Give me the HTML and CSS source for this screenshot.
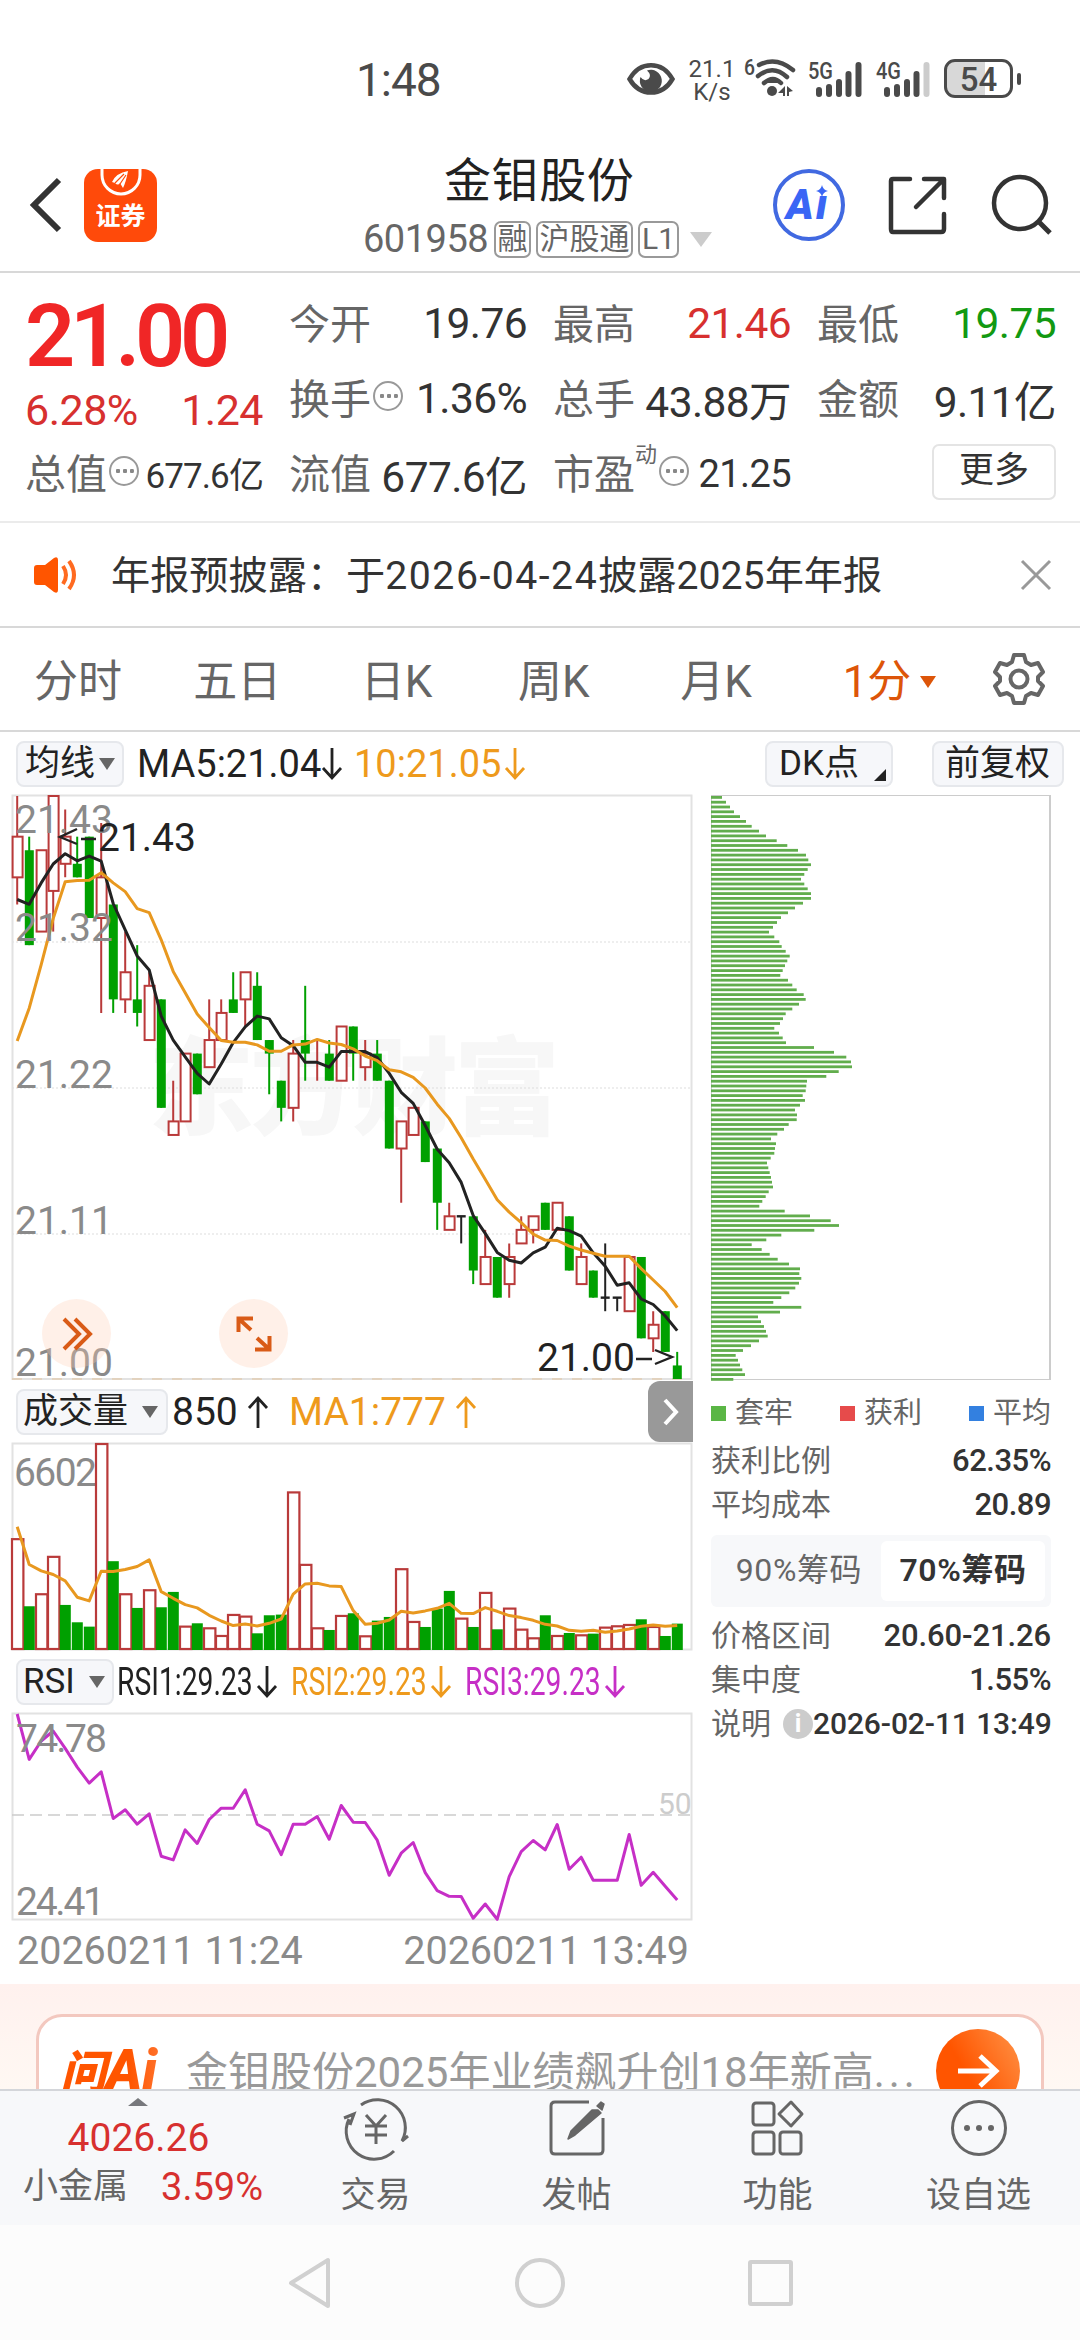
FILE: index.html
```html
<!DOCTYPE html>
<html lang="zh-CN">
<head>
  <meta charset="UTF-8">
  <meta name="viewport" content="width=device-width, initial-scale=1.0">
  <title>金钼股份 601958</title>
  <link rel="stylesheet" href="styles.css">
</head>
<body>
  <!-- 状态栏 -->
  <div class="status">
    <span class="clock">1:48</span>
    <svg class="eye" width="48" height="34" viewBox="0 0 48 34">
      <path d="M2.500 17C13 -1.500 35 -1.500 45.500 17C35 35 13 35 2.500 17Z" fill="none" stroke="#4a4a4a" stroke-width="4.500"/>
      <path d="M20 8.500A11 11 0 1 1 13.500 15Q17 20 21.500 17Q25 13 20 8.500Z" fill="#4a4a4a"/>
    </svg>
    <div class="speed"><span>21.1</span><span>K/s</span></div>
    <svg class="wifi" width="52" height="40" viewBox="0 0 52 40">
      <text x="0" y="17" font-size="22" font-weight="500" textLength="11" lengthAdjust="spacingAndGlyphs">6</text>
      <g fill="none" stroke="#4a4a4a" stroke-width="4.500" stroke-linecap="round">
        <path d="M15 7Q32 -2 49 12"/>
        <path d="M14 18Q29 6 43 19"/>
        <path d="M20 25Q29 17 37 25"/>
      </g>
      <circle cx="28" cy="33" r="5"/>
      <path d="M41 28v10h-2v-3h-5zM43 28l6 5-4 1v4h-2z"/>
    </svg>
    <svg class="signal" width="54" height="40" viewBox="0 0 54 40">
      <text x="0" y="19" font-size="24" font-weight="500" textLength="25" lengthAdjust="spacingAndGlyphs">5G</text>
      <g stroke="#4a4a4a" stroke-width="6" stroke-linecap="round">
        <path d="M11 30v4M21 27v7M31 22v12M40.500 14v20M50.500 5v29"/>
      </g>
    </svg>
    <svg class="signal" width="54" height="40" viewBox="0 0 54 40">
      <text x="0" y="19" font-size="24" font-weight="500" textLength="25" lengthAdjust="spacingAndGlyphs">4G</text>
      <g stroke="#4a4a4a" stroke-width="6" stroke-linecap="round">
        <path d="M11 30v4M21 27v7M31 22v12M40.500 14v20"/>
        <path d="M50.500 5v29" stroke="#ccc"/>
      </g>
    </svg>
    <div class="battery">54</div>
    <i class="battery-cap"></i>
  </div>

  <!-- 标题栏 -->
  <header class="header">
    <svg class="back" width="34" height="56" viewBox="0 0 34 56">
      <path d="M30 3L5 28L30 53" fill="none" stroke="#333" stroke-width="6"/>
    </svg>
    <div class="app-icon">
      <svg width="44" height="27" viewBox="0 0 44 27">
        <path d="M3 0V6A19 19 0 0 0 41 6V0" fill="none" stroke="#fff" stroke-width="3"/>
        <path d="M13 13Q17 4 29 2Q27 13 24 19L21 14Q19 17 16 14Z" fill="#fff"/>
        <path d="M16 14L25 5M21 15L27 6" stroke="#ff4a0a" stroke-width="1.200"/>
      </svg>
      <span>证券</span>
    </div>
    <div class="title">
      <h1>金钼股份</h1>
      <div class="code">
        <span class="num">601958</span>
        <span class="tag t1">融</span>
        <span class="tag t2">沪股通</span>
        <span class="tag t3">L1</span>
        <i class="tri tri-light"></i>
      </div>
    </div>
    <div class="ai-btn">
      <span class="ai-text">A<b>ı</b></span>
      <svg width="12" height="12" viewBox="0 0 12 12"><path d="M6 0Q7 5 12 6Q7 7 6 12Q5 7 0 6Q5 5 6 0Z" fill="#3a66f5"/></svg>
    </div>
    <svg class="share" width="60" height="60" viewBox="0 0 60 60" fill="none" stroke="#333" stroke-width="4.500" stroke-linecap="round" stroke-linejoin="round">
      <path d="M23 4H6Q4 4 4 6V54Q4 57 6 57H54Q57 57 57 54V39M37 4H57V23M56 5L29 32"/>
    </svg>
    <svg class="search" width="62" height="62" viewBox="0 0 62 62" fill="none" stroke="#333" stroke-width="4.500">
      <circle cx="29" cy="29" r="26"/>
      <path d="M47 47L59 59" stroke-width="5"/>
    </svg>
  </header>

  <!-- 行情 -->
  <section class="quote">
    <div class="price">
      <div class="last">21.00</div>
      <div class="change"><span>6.28%</span><span>1.24</span></div>
      <div class="cell small"><label>总值</label><i class="more-dot"></i><b>677.6亿</b></div>
    </div>
    <div class="stats">
      <div class="cell"><label>今开</label><b>19.76</b></div>
      <div class="cell"><label>最高</label><b class="red">21.46</b></div>
      <div class="cell"><label>最低</label><b class="green">19.75</b></div>
      <div class="cell"><label>换手</label><i class="more-dot"></i><b>1.36%</b></div>
      <div class="cell"><label>总手</label><b>43.88万</b></div>
      <div class="cell"><label>金额</label><b>9.11亿</b></div>
      <div class="cell"><label>流值</label><b>677.6亿</b></div>
      <div class="cell pe"><label>市盈</label><sup>动</sup><i class="more-dot"></i><b>21.25</b></div>
      <div class="cell"><button class="more">更多</button></div>
    </div>
  </section>

  <!-- 公告 -->
  <section class="notice">
    <svg width="46" height="38" viewBox="0 0 46 38">
      <path d="M4 9H12L21 2Q25 0 25 4V34Q25 38 21 36L12 29H4Q1 29 1 26V12Q1 9 4 9Z" fill="#ff5500"/>
      <path d="M30 10Q36 19 30 28M36 5Q46 19 36 33" fill="none" stroke="#ff6a20" stroke-width="4"/>
    </svg>
    <p>年报预披露：于<span>2026-04-24</span>披露<span class="y">2025</span>年年报</p>
    <svg class="close" width="30" height="30" viewBox="0 0 30 30"><path d="M1 1L29 29M29 1L1 29" stroke="#999" stroke-width="3"/></svg>
  </section>

  <!-- 周期 -->
  <nav class="tabs">
    <a>分时</a><a>五日</a><a>日K</a><a>周K</a><a>月K</a>
    <a class="active">1分<i class="tri"></i></a>
    <svg width="54" height="54" viewBox="0 0 54 54" fill="none" stroke="#666" stroke-width="4" stroke-linejoin="round">
      <path d="M22 3H32L34 10L39 13L46 11L51 20L46 25V29L51 34L46 43L39 41L34 44L32 51H22L20 44L15 41L8 43L3 34L8 29V25L3 20L8 11L15 13L20 10Z"/>
      <circle cx="27" cy="27" r="8.500"/>
    </svg>
  </nav>

  <div class="ind ind-ma">
    <span class="pick">均线<i class="tri"></i></span>
    <span class="v">MA5:21.04</span><svg class="arrow" viewBox="0 0 20 32"><path d="M10 0V30M1 20L10 30L19 20"/></svg>
    <span class="v orange v2">10:21.05</span><svg class="arrow orange" viewBox="0 0 20 32"><path d="M10 0V30M1 20L10 30L19 20"/></svg>
    <span class="pick dk">DK点<i class="corner"></i></span>
    <span class="pick fq">前复权</span>
  </div>

  <main class="main">
    <div class="left">
      <div class="kbox">
        <svg id="kline" width="681" height="585" viewBox="0 0 681 585"></svg>
        <div class="float f1"><svg width="32" height="32" viewBox="0 0 32 32"><path d="M3 1L18 16L3 31M14 1L29 16L14 31"/></svg></div>
        <div class="float f2"><svg width="36" height="36" viewBox="0 0 36 36"><path d="M2.500 16V2.500H17M3 3L15 14M33.500 20V33.500H19M33 33L21 22"/></svg></div>
      </div>
      <div class="ind ind-vol">
        <span class="pick">成交量<i class="tri"></i></span>
        <span class="v">850</span><svg class="arrow" viewBox="0 0 20 32"><path d="M10 32V2M1 12L10 2L19 12"/></svg>
        <span class="v orange v2">MA1:777</span><svg class="arrow orange" viewBox="0 0 20 32"><path d="M10 32V2M1 12L10 2L19 12"/></svg>
        <span class="next"><svg width="20" height="28" viewBox="0 0 20 28"><path d="M4 2L15 14L4 26" fill="none" stroke="#fff" stroke-width="4"/></svg></span>
      </div>
      <svg id="volume" width="681" height="208" viewBox="0 0 681 208"></svg>
      <div class="ind ind-rsi">
        <span class="pick">RSI<i class="tri"></i></span>
        <span class="r"><span>RSI1:29.23</span></span><svg class="arrow" viewBox="0 0 20 32"><path d="M10 0V30M1 20L10 30L19 20"/></svg>
        <span class="r orange"><span>RSI2:29.23</span></span><svg class="arrow orange" viewBox="0 0 20 32"><path d="M10 0V30M1 20L10 30L19 20"/></svg>
        <span class="r purple"><span>RSI3:29.23</span></span><svg class="arrow purple" viewBox="0 0 20 32"><path d="M10 0V30M1 20L10 30L19 20"/></svg>
      </div>
      <svg id="rsi" width="681" height="208" viewBox="0 0 681 208"></svg>
      <div class="dates"><span>20260211 11:24</span><span>20260211 13:49</span></div>
    </div>

    <!-- 筹码分布 -->
    <aside class="chips">
      <svg id="chips" width="340" height="585" viewBox="0 0 340 585"></svg>
      <div class="legend">
        <span><i class="lg"></i>套牢</span><span><i class="lr"></i>获利</span><span><i class="lb"></i>平均</span>
      </div>
      <div class="row"><span>获利比例</span><b>62.35%</b></div>
      <div class="row"><span>平均成本</span><b>20.89</b></div>
      <div class="switch"><span>90%筹码</span><span class="on">70%筹码</span></div>
      <div class="row"><span>价格区间</span><b class="range">20.60-21.26</b></div>
      <div class="row"><span>集中度</span><b>1.55%</b></div>
      <div class="row"><span>说明</span><i class="info">i</i><b class="time">2026-02-11 13:49</b></div>
    </aside>
  </main>

  <!-- 问Ai -->
  <section class="ask">
    <div class="ask-card">
      <span class="ask-logo"><em>问</em>Ai</span>
      <p>金钼股份2025年业绩飙升创18年新高<u>...</u></p>
      <span class="go"><svg width="42" height="36" viewBox="0 0 42 36"><path d="M1 18H38M23 3L39 18L23 33" fill="none" stroke="#fff" stroke-width="5"/></svg></span>
    </div>
  </section>

  <!-- 底部导航 -->
  <nav class="bottom">
    <div class="index">
      <i class="tri up"></i>
      <b>4026.26</b>
      <div><span>小金属</span><b>3.59%</b></div>
    </div>
    <a>
      <svg width="66" height="60" viewBox="0 0 66 60" fill="none" stroke="#666" stroke-width="3">
        <path d="M18 7A28 28 0 0 1 59 43L65 38M6 21A28 28 0 0 0 51 53M1 20L11 16L7 27"/>
        <path d="M23 17L33 28L43 17M22 28H44M22 37H44M33 28V46"/>
      </svg>
      交易
    </a>
    <a>
      <svg width="60" height="60" viewBox="0 0 60 60" fill="none" stroke="#666" stroke-width="3" stroke-linejoin="round">
        <path d="M42 4H8Q4 4 4 8V52Q4 56 8 56H52Q56 56 56 52V20"/>
        <path d="M51 12L54 15L28 37L21 41L24 33L45 12ZM50 8L54 4L57 6L55 12Z" fill="#666" stroke-width="1.500"/>
      </svg>
      发帖
    </a>
    <a>
      <svg width="60" height="60" viewBox="0 0 60 60" fill="none" stroke="#666" stroke-width="3">
        <rect x="5" y="5" width="21" height="22" rx="3"/>
        <rect x="5" y="34" width="21" height="22" rx="3"/>
        <rect x="32" y="34" width="21" height="22" rx="3"/>
        <path d="M43 4L54 16L43 28L31 16Z" stroke-linejoin="round"/>
      </svg>
      功能
    </a>
    <a>
      <svg width="60" height="60" viewBox="0 0 60 60">
        <circle cx="30" cy="30" r="26.500" fill="none" stroke="#666" stroke-width="3"/>
        <g fill="#666"><circle cx="18" cy="30" r="3"/><circle cx="30" cy="30" r="3"/><circle cx="42" cy="30" r="3"/></g>
      </svg>
      设自选
    </a>
  </nav>

  <div class="sysnav">
    <svg width="46" height="54" viewBox="0 0 46 54"><path d="M42 4V50L5 27Z"/></svg>
    <svg width="50" height="54" viewBox="0 0 50 54"><circle cx="25" cy="27" r="23"/></svg>
    <svg width="46" height="54" viewBox="0 0 46 54"><rect x="2" y="6" width="41" height="42" rx="1"/></svg>
  </div>

  <script src="chart.js"></script>
</body>
</html>
```

FILE: styles.css
```css
* {
  box-sizing: border-box;
}

body {
  margin: 0;
  width: 1080px;
  height: 2340px;
  overflow: hidden;
  background: #fff;
  color: #333;
  font-family: Roboto, "Noto Sans CJK SC", sans-serif;
}

svg {
  display: block;
  flex: none;
  overflow: visible;
}

i {
  font-style: normal;
}

.red {
  color: #d7302f;
}

.green {
  color: #129912;
}

.tri {
  display: inline-block;
  border: 8px solid transparent;
  border-top: 12px solid #666;
  border-bottom: 0;
}

/* 状态栏 */
.status {
  height: 150px;
  padding: 58px 0 0 356px;
  display: flex;
  align-items: flex-start;
  color: #4a4a4a;
}

.status text,
.status circle,
.wifi path:last-child {
  fill: #4a4a4a;
}

.clock {
  width: 271px;
  margin-top: -5px;
  font-size: 46px;
  line-height: 54px;
  letter-spacing: -1px;
}

.eye {
  margin-top: 4px;
}

.speed {
  width: 44px;
  margin-left: 15px;
  display: flex;
  flex-direction: column;
  align-items: center;
  font-size: 24px;
  line-height: 23px;
}

.wifi {
  margin-left: 10px;
}

.signal {
  margin: 2px 0 0 12px;
}

.signal + .signal {
  margin-left: 14px;
}

.battery {
  width: 69px;
  height: 39px;
  margin: 1px 0 0 14px;
  border: 3px solid #4a4a4a;
  border-radius: 11px;
  background: linear-gradient(90deg, #d8d8d8 60%, #fff 60%);
  font-size: 33px;
  font-weight: 500;
  line-height: 35px;
  text-align: center;
}

.battery-cap {
  width: 4px;
  height: 12px;
  margin: 15px 0 0 4px;
  border-radius: 2px;
  background: #4a4a4a;
}

/* 标题栏 */
.header {
  height: 123px;
  border-bottom: 2px solid #d8d8d8;
  padding-left: 29px;
  display: flex;
}

.back {
  margin-top: 27px;
}

.app-icon {
  width: 73px;
  height: 73px;
  margin: 19px 0 0 21px;
  border-radius: 14px;
  background: #ff4a0a;
  color: #fff;
  font-size: 25px;
  font-weight: 700;
  line-height: 41px;
  display: flex;
  flex-direction: column;
  align-items: center;
}

.title {
  width: 350px;
  margin-left: 206px;
}

.title h1 {
  margin: 6px 0 0 81px;
  font-size: 47px;
  line-height: 50px;
  font-weight: 400;
  letter-spacing: 0.6px;
  color: #222;
}

.code {
  margin-top: 14px;
  display: flex;
  align-items: center;
  height: 38px;
  color: #666;
  font-size: 38px;
}

.code .num {
  width: 130px;
  letter-spacing: -0.5px;
}

.tag {
  height: 37px;
  border: 2px solid #999;
  border-radius: 7px;
  font-size: 30px;
  line-height: 32px;
  text-align: center;
}

.t1 {
  width: 37px;
  margin-left: 1px;
}

.t2 {
  width: 97px;
  margin-left: 5px;
}

.t3 {
  width: 41px;
  margin-left: 5px;
}

.tri-light {
  margin-left: 11px;
  border-width: 15px 11px 0;
  border-top-color: #ccc;
}

.ai-btn {
  position: relative;
  width: 72px;
  height: 72px;
  margin: 19px 0 0 60px;
  border: 4px solid #4169e1;
  border-radius: 50%;
}

.ai-text {
  display: block;
  margin-left: 9px;
  color: #3a66f5;
  font: italic 900 42px/64px Roboto, sans-serif;
}

.ai-text b {
  margin-left: 2px;
}

.ai-btn svg {
  position: absolute;
  right: 13px;
  top: 12px;
}

.share {
  margin: 25px 0 0 42px;
}

.search {
  margin: 24px 0 0 44px;
}

/* 行情 */
.quote {
  height: 250px;
  border-bottom: 2px solid #ebebeb;
  padding: 13px 24px 0 25px;
  display: flex;
}

.price {
  width: 238px;
  margin-right: 26px;
}

.last {
  height: 96px;
  color: #f02626;
  font-size: 88px;
  font-weight: 600;
  line-height: 99px;
  letter-spacing: -5.2px;
}

.change {
  height: 54px;
  display: flex;
  justify-content: space-between;
  color: #d7302f;
  font-size: 43px;
  line-height: 57px;
  letter-spacing: -0.5px;
}

.stats {
  flex: 1;
  display: grid;
  grid-template-columns: 238px 238px 1fr;
  grid-auto-rows: 75px;
  column-gap: 26px;
}

.cell {
  display: flex;
  align-items: center;
  height: 75px;
}

.cell label {
  margin-top: -6px;
  color: #666;
  font-size: 41px;
}

.cell b {
  margin-left: auto;
  font-size: 42.5px;
  font-weight: 400;
  letter-spacing: -0.6px;
  white-space: nowrap;
}

.small b {
  margin-top: -2px;
  font-size: 35px;
  letter-spacing: -0.9px;
}

.pe b {
  font-size: 38px;
}

.pe sup {
  margin-top: -38px;
  font-size: 22px;
  color: #666;
  line-height: 30px;
}

.more-dot {
  width: 30px;
  height: 30px;
  margin: -5px 0 0 2px;
  border: 2px solid #999;
  border-radius: 50%;
  background: radial-gradient(circle at 3px 3px, #888 2px, transparent 2.5px) 4px 10px / 7px 7px repeat-x;
  background-clip: content-box;
  padding: 0 3px;
}

.more {
  width: 124px;
  height: 56px;
  margin: -4px 0 0 auto;
  padding: 0 0 2px;
  border: 2px solid #e4e4e4;
  border-radius: 7px;
  background: #fff;
  color: #333;
  font-family: inherit;
  font-size: 35px;
  line-height: 44px;
}

/* 公告 */
.notice {
  height: 105px;
  border-bottom: 2px solid #d8d8d8;
  padding: 0 29px 0 33px;
  display: flex;
  align-items: center;
}

.notice p {
  margin: 0 0 6px 32px;
  font-size: 39.2px;
  white-space: nowrap;
}

.notice span {
  letter-spacing: 1.5px;
}

.notice .y {
  letter-spacing: 0;
}

.close {
  margin-left: auto;
}

/* 周期 */
.tabs {
  height: 104px;
  border-bottom: 2px solid #d8d8d8;
  padding: 0 34px;
  display: flex;
  align-items: center;
  color: #666;
  font-size: 44px;
}

.tabs a {
  width: 160px;
  white-space: nowrap;
  padding-bottom: 2px;
}

.tabs .active {
  width: 150px;
  margin-left: 3px;
  color: #dd5509;
}

.tabs a:nth-child(3) {
  width: 158px;
  margin-left: 8px;
}

.tabs a:nth-child(4) {
  width: 163px;
}

.tabs .tri {
  margin-left: 9px;
  vertical-align: 9px;
  border-width: 12px 8px 0;
  border-top-color: #dd5509;
}

/* 指标栏 */
.ind {
  display: flex;
  align-items: center;
  height: 63px;
  color: #222;
  font-size: 38px;
  white-space: nowrap;
}

.ind-ma {
  padding-left: 16px;
}

.pick {
  height: 46px;
  flex: none;
  display: flex;
  align-items: center;
  padding-left: 7px;
  border: 2px solid #e6e8ec;
  border-radius: 8px;
  background: #f6f7fa;
  font-size: 35px;
  line-height: 42px;
}

.ind-ma .pick {
  width: 108px;
}

.ind-ma .pick .tri {
  margin-left: 4px;
}

.ind-ma .v {
  margin-left: 13px;
  width: 185px;
}

.ind-ma .v2 {
  margin-left: 12px;
  width: 151px;
}

.arrow {
  width: 20px;
  height: 32px;
  fill: none;
  stroke: #222;
  stroke-width: 2.8;
}

.orange {
  color: #ee9a1c;
}

.purple {
  color: #c62fc6;
}

.arrow.orange {
  stroke: #ee9a1c;
}

.arrow.purple {
  stroke: #c62fc6;
}

.ind-ma .dk {
  position: relative;
  width: 128px;
  margin-left: auto;
  padding-left: 12px;
}

.corner {
  position: absolute;
  right: 5px;
  bottom: 4px;
  border: 6px solid #222;
  border-top-color: transparent;
  border-left-color: transparent;
}

.ind-ma .fq {
  width: 132px;
  margin: 0 16px 0 39px;
  padding-left: 11px;
}

/* 图表 */
.main {
  display: flex;
  height: 1189px;
  padding-left: 12px;
}

.left {
  width: 681px;
}

.kbox {
  position: relative;
}

.float {
  position: absolute;
  top: 504px;
  width: 69px;
  height: 69px;
  border-radius: 50%;
  background: rgba(255, 205, 180, 0.3);
  display: flex;
  align-items: center;
  justify-content: center;
}

.float svg {
  fill: none;
  stroke: #d95b17;
  stroke-width: 4;
}

.f1 {
  left: 30px;
}

.f2 {
  left: 207px;
}

.frame {
  fill: none;
  stroke: #e2e2e2;
  stroke-width: 2;
}

.axis {
  fill: #8a8a8a;
  font-size: 39px;
}

.mark {
  fill: #222;
  font-size: 39px;
}

.watermark {
  fill: #f7f7f7;
  font-size: 106px;
  font-weight: 900;
}

.line {
  fill: none;
  stroke-width: 3;
  stroke-linejoin: round;
}

.ind-vol {
  padding-left: 4px;
}

.ind-vol .pick {
  width: 152px;
  padding-left: 5px;
}

.ind-vol .pick .tri {
  margin-left: 14px;
}

.ind-vol .v {
  margin-left: 4px;
  width: 76px;
  font-size: 39px;
}

.ind-vol .v2 {
  margin-left: 21px;
  width: 167px;
}

.next {
  width: 45px;
  height: 61px;
  margin-left: auto;
  border-radius: 12px 0 0 12px;
  background: #999;
  display: flex;
  align-items: center;
  justify-content: center;
}

.ind-rsi {
  height: 62px;
  padding-left: 4px;
}

.ind-rsi .pick {
  width: 98px;
  margin-right: 3px;
  padding-left: 5px;
}

.ind-rsi .pick .tri {
  margin-left: 14px;
}

/* 三个 RSI 数值压窄后并排 */
.r {
  width: 137px;
  margin-right: 3px;
}

.r span {
  display: inline-block;
  font-size: 39px;
  transform: scaleX(0.725);
  transform-origin: left;
}

.ind-rsi .arrow {
  margin-right: 14px;
}

.dates {
  display: flex;
  justify-content: space-between;
  padding: 6px 4px 0 5px;
  color: #8a8a8a;
  font-size: 39.5px;
}

/* 筹码分布 */
.chips {
  width: 340px;
  margin-left: 18px;
}

.legend {
  height: 59px;
  display: flex;
  justify-content: space-between;
  align-items: center;
  color: #666;
  font-size: 29px;
}

.legend i {
  display: inline-block;
  width: 15px;
  height: 15px;
  margin-right: 9px;
  vertical-align: 2px;
}

.lg {
  background: #5ab645;
}

.lr {
  background: #e64b4b;
}

.lb {
  background: #3380e0;
}

.row {
  height: 44px;
  display: flex;
  align-items: center;
  color: #666;
  font-size: 30px;
  line-height: 40px;
  white-space: nowrap;
}

.row b {
  margin-left: auto;
  color: #333;
  font-size: 31px;
  font-weight: 500;
  letter-spacing: -0.5px;
}

.row .range {
  letter-spacing: -0.1px;
}

.row .time {
  font-size: 30px;
  letter-spacing: -0.1px;
}

.info {
  width: 30px;
  height: 30px;
  margin-left: 12px;
  flex: none;
  border-radius: 50%;
  background: #ccc;
  color: #fff;
  font-size: 25px;
  font-weight: 700;
  line-height: 30px;
  text-align: center;
}

.switch {
  height: 72px;
  margin: 8px 0 7px;
  padding: 6px;
  border-radius: 6px;
  background: #f7f8fa;
  display: flex;
  color: #666;
  font-size: 32px;
  line-height: 58px;
  text-align: center;
}

.switch span {
  flex: 1;
  letter-spacing: 0.6px;
}

.switch .on {
  border-radius: 6px;
  background: #fff;
  color: #333;
  font-weight: 600;
}

/* 问Ai */
.ask {
  height: 105px;
  padding: 30px 36px 0;
  background: linear-gradient(#fff1ee, #fff8f3);
  overflow: hidden;
}

.ask-card {
  height: 114px;
  border: 3px solid #f3c8bf;
  border-radius: 26px;
  background: #fff;
  padding: 0 21px;
  display: flex;
  align-items: center;
  white-space: nowrap;
}

.ask-logo {
  width: 126px;
  background: linear-gradient(90deg, #ff5500 55%, #ff8a50);
  -webkit-background-clip: text;
  color: transparent;
  font-size: 55px;
  font-weight: 900;
  font-style: italic;
  line-height: 60px;
  letter-spacing: 0;
}

.ask-logo em {
  font-size: 46px;
}

.ask-card p {
  margin: 0 0 6px;
  color: #999;
  font-size: 42px;
}

.ask-card u {
  text-decoration: none;
  letter-spacing: 4px;
}

.go {
  width: 84px;
  height: 84px;
  margin-left: auto;
  flex: none;
  border-radius: 50%;
  background: linear-gradient(60deg, #ff5500 40%, #ff9448);
  display: flex;
  align-items: center;
  justify-content: center;
}

/* 底部导航 */
.bottom {
  height: 136px;
  border-top: 2px solid #d4d6da;
  background: #f7f8fa;
  display: flex;
  color: #666;
  font-size: 35px;
}

.bottom b {
  color: #d7302f;
  font-weight: 400;
}

.index {
  width: 275px;
  display: flex;
  flex-direction: column;
  align-items: center;
}

.index > b {
  margin: 9px 0 0 2px;
  font-size: 39px;
  line-height: 46px;
  letter-spacing: 0;
}

.index div {
  width: 240px;
  margin: 2px 0 0 11px;
  display: flex;
  justify-content: space-between;
  line-height: 48px;
}

.index div b {
  font-size: 38px;
}

.up {
  margin-top: 7px;
  border-width: 0 10px 8px;
  border-bottom: 8px solid #77787c;
}

.bottom a {
  width: 201px;
  display: flex;
  flex-direction: column;
  align-items: center;
  padding-top: 7px;
  line-height: 76px;
}

.sysnav {
  height: 116px;
  background: #fcfcfc;
  display: flex;
  justify-content: center;
  align-items: center;
  gap: 183px;
}

.sysnav svg {
  fill: none;
  stroke: #d0d0d0;
  stroke-width: 4;
  stroke-linejoin: round;
}
```

FILE: chart.js
```js
const RED = '#b93a3a';
const GREEN = '#00a000';
const DARK = '#222';
const ORANGE = '#e8981f';
const STEP = 12;

// [最高, 开收上沿, 开收下沿, 最低, 颜色]，单位为 21 元以上的分
const candles = [
  [43, 40, 37, 35, 'r'], [40, 39, 32, 32, 'g'], [39, 39, 33, 33, 'r'], [43, 43, 36, 33, 'r'],
  [42, 40, 38, 37, 'r'], [40, 38, 37, 37, 'g'], [40, 40, 34, 34, 'g'], [41, 37, 34, 27, 'r'],
  [35, 35, 28, 27, 'g'], [33, 30, 28, 27, 'r'], [32, 28, 27, 26, 'g'], [30, 29, 25, 25, 'r'],
  [28, 28, 20, 20, 'g'], [22, 19, 18, 18, 'r'], [24, 24, 19, 19, 'r'], [24, 24, 21, 21, 'g'],
  [28, 25, 23, 23, 'r'], [28, 27, 25, 25, 'r'], [30, 28, 27, 27, 'g'], [30, 30, 28, 26, 'r'],
  [30, 29, 25, 25, 'g'], [25, 25, 24, 21, 'g'], [22, 22, 20, 19, 'g'], [25, 24, 20, 19, 'r'],
  [29, 25, 24, 22, 'g'], [25, 25, 25, 22, 'l'], [25, 24, 22, 22, 'g'], [26, 26, 22, 22, 'r'],
  [26, 26, 24, 22, 'g'], [25, 24, 23, 22, 'r'], [25, 24, 22, 22, 'g'], [22, 22, 17, 17, 'g'],
  [19, 19, 17, 13, 'r'], [20, 20, 18, 18, 'r'], [19, 19, 16, 16, 'g'], [17, 17, 13, 11, 'g'],
  [13, 12, 11, 11, 'r'], [12, 12, 12, 10, 'k'], [12, 12, 8, 7, 'g'], [11, 9, 7, 7, 'r'],
  [9, 9, 6, 6, 'g'], [10, 9, 7, 6, 'r'], [12, 11, 10, 10, 'r'], [12, 12, 11, 10, 'r'],
  [13, 13, 11, 11, 'g'], [13, 13, 11, 11, 'r'], [12, 12, 8, 8, 'g'], [10, 9, 7, 7, 'r'],
  [8, 8, 6, 6, 'g'], [10, 6, 6, 5, 'k'], [6, 6, 6, 5, 'k'], [9, 9, 5, 5, 'r'],
  [9, 9, 3, 3, 'g'], [5, 4, 3, 2, 'r'], [5, 5, 2, 2, 'g'], [2, 1, 0, 0, 'g']
];

const ma5 = [300, 312, 258, 210, 184, 202, 190, 203, 310, 377, 443, 478, 595, 656, 698, 740, 767, 716, 662, 622,
  595, 602, 650, 670, 712, 712, 724, 685, 685, 685, 700, 740, 788, 816, 872, 932, 966, 1016, 1100, 1145,
  1193, 1213, 1220, 1194, 1180, 1132, 1138, 1152, 1194, 1228, 1276, 1270, 1311, 1325, 1354, 1391];
const ma10 = [658, 575, 465, 348, 255, 252, 251, 232, 258, 280, 323, 333, 402, 482, 536, 590, 624, 657, 661, 661,
  668, 684, 684, 668, 666, 654, 663, 667, 678, 696, 708, 731, 736, 750, 777, 818, 854, 903, 957, 1008,
  1060, 1091, 1118, 1147, 1162, 1163, 1177, 1187, 1195, 1203, 1203, 1203, 1234, 1263, 1292, 1333];

const volume = [475, 676, 640, 528, 672, 724, 737, 190, 541, 640, 681, 628, 679, 633, 737, 727, 742, 765, 702, 707,
  757, 703, 701, 335, 552, 742, 747, 705, 697, 766, 719, 708, 565, 723, 738, 683, 630, 713, 738, 636,
  745, 683, 746, 772, 703, 765, 756, 763, 758, 740, 736, 732, 715, 738, 765, 728];
const volColor = 'rgrrgggrgrgrggrgrrrrgggrrrgrgrggrrgggrgrgrrrgrgrgrrrgrgg';
const volMa = [438, 551, 570, 581, 600, 649, 660, 571, 572, 566, 557, 537, 632, 652, 671, 681, 703, 720, 734, 729,
  735, 727, 714, 640, 609, 607, 615, 617, 689, 730, 727, 717, 691, 696, 690, 682, 667, 697, 698, 680,
  691, 704, 710, 718, 730, 735, 748, 751, 748, 754, 750, 744, 736, 732, 736, 734];

const rsi = [219, 355, 300, 270, 322, 378, 426, 392, 532, 506, 549, 518, 645, 656, 566, 607, 535, 501, 501, 446,
  549, 569, 640, 549, 549, 526, 594, 493, 543, 544, 597, 702, 636, 604, 694, 748, 765, 766, 831, 788,
  834, 706, 631, 598, 626, 550, 684, 648, 717, 717, 717, 580, 732, 693, 735, 776];

const chips = [95, 107, 119, 131, 149, 167, 184, 206, 227, 259, 291, 323, 347, 354, 362, 352, 342, 332, 342, 352,
  362, 362, 338, 314, 293, 272, 260, 248, 236, 252, 267, 274, 286, 298, 291, 284, 277, 270, 293, 306,
  319, 340, 346, 326, 306, 286, 278, 269, 252, 266, 277, 287, 371, 431, 468, 482, 485, 445, 408, 350,
  348, 346, 337, 344, 329, 314, 320, 319, 295, 281, 261, 242, 257, 254, 252, 241, 230, 234, 238, 242,
  245, 248, 235, 226, 216, 207, 283, 359, 421, 446, 372, 273, 228, 184, 214, 238, 262, 296, 329, 327,
  333, 326, 315, 297, 273, 249, 333, 269, 203, 212, 221, 227, 232, 206, 182, 158, 136, 143, 149, 156,
  164, 129];

const cx = i => 5.2 + STEP * i;

function points(data, top, bottom, height) {
  return data.map((v, i) => `${cx(i).toFixed(1)},${(1 + (v - top) / (bottom - top) * height).toFixed(1)}`).join(' ');
}

function polyline(pts, color) {
  return `<polyline class="line" points="${pts}" stroke="${color}"/>`;
}

function drawKline() {
  const y = p => 1 + (43 - p) * 583 / 43;
  let s = '<text class="watermark" x="136" y="331" textLength="412">东方财富</text>';
  [147, 293, 439].forEach(g => {
    s += `<path d="M0 ${g}H680" stroke="#ddd" stroke-width="1" stroke-dasharray="2 2"/>`;
  });
  s += '<rect class="frame" x="0.5" y="0.5" width="679" height="583.5"/>';
  s += '<path d="M0 584H680" stroke="#e3c39b" stroke-width="1" stroke-dasharray="10 10"/>';
  candles.forEach(([h, a, b, l, c], i) => {
    const x = cx(i);
    const color = { r: RED, g: GREEN, k: DARK, l: RED }[c];
    if (c === 'g') {
      s += `<path d="M${x} ${y(h)}V${y(l)}" stroke="${color}" stroke-width="2"/>`;
      s += `<rect x="${x - 4.4}" y="${y(a)}" width="9" height="${y(b) - y(a)}" fill="${color}"/>`;
    } else if (c === 'r') {
      s += `<path d="M${x} ${y(h)}V${y(a)}M${x} ${y(b)}V${y(l)}" stroke="${color}" stroke-width="2"/>`;
      s += `<rect x="${x - 4.6}" y="${y(a)}" width="10" height="${y(b) - y(a)}" fill="#fff" stroke="${color}" stroke-width="2"/>`;
    } else {
      s += `<path d="M${x} ${y(h)}V${y(l)}" stroke="${color}" stroke-width="2"/>`;
      if (c === 'k') s += `<path d="M${x - 4.5} ${y(a)}h9" stroke="${color}" stroke-width="2.4"/>`;
    }
  });
  s += polyline(points(ma5, 38, 1516, 584), DARK);
  s += polyline(points(ma10, 38, 1516, 584), ORANGE);
  [['21.43', 38], ['21.32', 146], ['21.22', 293], ['21.11', 439], ['21.00', 581]].forEach(([t, ty]) => {
    s += `<text class="axis" x="3" y="${ty}">${t}</text>`;
  });
  s += '<text class="mark" x="86" y="56">21.43</text>';
  s += '<path d="M65 34L48 42L65 49M69 44H84" fill="none" stroke="#222" stroke-width="2.4"/>';
  s += '<text class="mark" x="525" y="576">21.00</text>';
  s += '<path d="M624 564H640M643 555L660 562L643 569" fill="none" stroke="#222" stroke-width="2.4"/>';
  document.getElementById('kline').innerHTML = s;
}

function drawVolume() {
  const y = v => 1 + (v - 190) / 614 * 205;
  let s = '<rect class="frame" x="0.5" y="0.5" width="679" height="206"/>';
  s += '<text class="axis" x="2" y="43" textLength="83">6602</text>';
  volume.forEach((v, i) => {
    const x = cx(i);
    if (volColor[i] === 'g') {
      s += `<rect x="${x - 5.4}" y="${y(v)}" width="11" height="${207 - y(v)}" fill="${GREEN}"/>`;
    } else {
      s += `<rect x="${x - 5.2}" y="${y(v)}" width="11.4" height="${206 - y(v)}" fill="#fff" stroke="${RED}" stroke-width="2.2"/>`;
    }
  });
  s += polyline(points(volMa, 190, 804, 205), ORANGE);
  document.getElementById('volume').innerHTML = s;
}

function drawRsi() {
  let s = '<rect class="frame" x="0.5" y="0.5" width="679" height="206"/>';
  s += '<path d="M0 102H680" stroke="#ccc" stroke-width="1.5" stroke-dasharray="12 6"/>';
  s += '<text x="646" y="101" font-size="30" fill="#ccc">50</text>';
  s += polyline(points(rsi, 219, 836, 206), '#c62fc6');
  s += '<text class="axis" x="4" y="39" textLength="91">74.78</text><text class="axis" x="4" y="202" textLength="89">24.41</text>';
  document.getElementById('rsi').innerHTML = s;
}

function drawChips() {
  let s = '<rect x="0.5" y="0.5" width="339" height="584" fill="none" stroke="#ccc"/><path d="M339 0V584" stroke="#ccc" stroke-width="2"/>';
  chips.forEach((v, i) => {
    s += `<rect x="0" y="${(1 + 4.81 * i).toFixed(1)}" width="${((v - 62) / 3).toFixed(1)}" height="2.8" fill="#62ad4d"/>`;
  });
  document.getElementById('chips').innerHTML = s;
}

drawKline();
drawVolume();
drawRsi();
drawChips();
```
